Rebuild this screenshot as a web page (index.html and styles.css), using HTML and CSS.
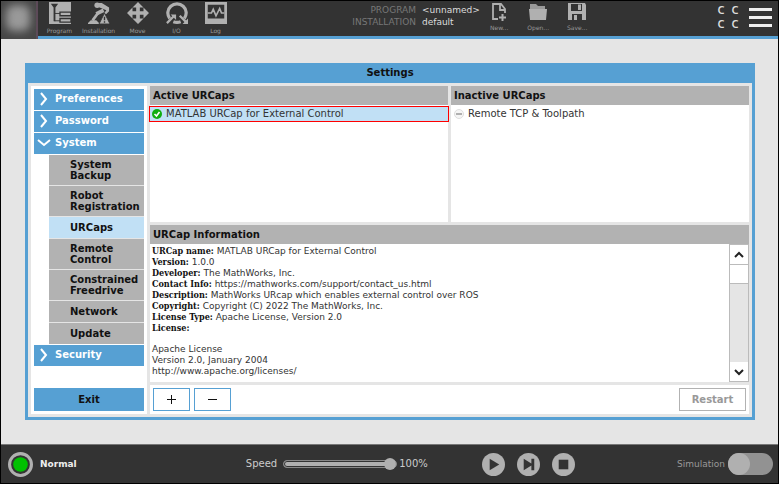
FILE: index.html
```
<!DOCTYPE html>
<html lang="en">
<head>
    <meta charset="UTF-8">
    <title>Settings</title>
    <link rel="stylesheet" href="styles.css">
</head>
<body>
<header class="topbar">
    <div class="start">
        <div class="logo"><div class="logo-pic"></div></div>
        <nav class="nav">
            <button class="tab">
                <svg viewBox="0 0 24 24"><path fill="#b0b0b0" d="M0 0h24v24H0z"/><path fill="#333" d="M2 2h8L7 6v15H5V6z"/><path d="M6 12.500h6M6 20.500h6" stroke="#333"/><path d="M12 11h12v4H12zM12 18h12v4H12z" fill="#b0b0b0" stroke="#333" stroke-width="1.500"/></svg>
                <span>Program</span>
            </button>
            <button class="tab">
                <svg viewBox="0 0 24 24"><path d="M0 24v-1l3-3h6l3 3v1z" fill="#b0b0b0"/><path d="M5 20l6-8" fill="none" stroke="#b0b0b0" stroke-width="3"/><path d="M9 13l8-4" stroke="#b0b0b0" stroke-width="4"/><path d="M10 1h5l8 5v4l-3 3h-3l3-4-10-4z" fill="#b0b0b0"/><circle cx="10" cy="3.500" r="3" fill="#b0b0b0"/><path d="M18 12l6 12H12z" fill="#b0b0b0" stroke="#333"/><path d="M18 16v4M18 21v1.500" stroke="#333" stroke-width="1.500"/></svg>
                <span>Installation</span>
            </button>
            <button class="tab">
                <svg viewBox="0 0 24 24"><path fill="#b0b0b0" d="M12 0l6 6h-4v4h4V6l6 6-6 6v-4h-4v4h4l-6 6-6-6h4v-4H6v4l-6-6 6-6v4h4V6H6z"/></svg>
                <span>Move</span>
            </button>
            <button class="tab">
                <svg viewBox="0 0 24 24"><path d="M4 18A10 10 0 1 1 20 18M8 21.500q4 1.500 8 0" fill="none" stroke="#b0b0b0" stroke-width="3.500"/><path d="M1 23l8-8M15 15l7 7" stroke="#b0b0b0" stroke-width="2.500"/><path d="M5 13.500h6v6zM24 18v6h-6z" fill="#b0b0b0"/></svg>
                <span>I/O</span>
            </button>
            <button class="tab">
                <svg viewBox="0 0 24 24"><path fill="#b0b0b0" d="M0 0h24v24H0z"/><path fill="#333" d="M3 3h18v15H3z"/><path d="M3 12h4l2-4 3 7 4-8 2 5h3" fill="none" stroke="#b0b0b0" stroke-width="1.800"/></svg>
                <span>Log</span>
            </button>
        </nav>
    </div>
    <div class="middle">
        <dl class="info">
            <dt>PROGRAM</dt><dd>&lt;unnamed&gt;</dd>
            <dt>INSTALLATION</dt><dd>default</dd>
        </dl>
        <div class="files">
            <button class="file">
                <svg viewBox="0 0 18 18"><path d="M15 10V6l-4-5H3v15h5M10 1v6h5" fill="none" stroke="#b0b0b0" stroke-width="1.800"/><path d="M12.500 11v7M9 14.500h7" stroke="#b0b0b0" stroke-width="2"/></svg>
                <span>New...</span>
            </button>
            <button class="file">
                <svg viewBox="0 0 18 18"><path d="M1 6V1h6l2 2h7v3z" fill="#999"/><path d="M0 6h18l-1 11H1z" fill="#b0b0b0"/></svg>
                <span>Open...</span>
            </button>
            <button class="file">
                <svg viewBox="0 0 18 18"><path d="M0 0h17l1 2v15H0z" fill="#b0b0b0"/><path d="M3 1h11v7H3zM4 11h10v6H4z" fill="#333"/><path d="M10 1.500h3V7h-3zM6 12h3v5H6z" fill="#b0b0b0"/></svg>
                <span>Save...</span>
            </button>
        </div>
    </div>
    <div class="end">
        <div class="code"><span>C</span><span>C</span><span>C</span><span>C</span></div>
        <button class="burger" aria-label="Menu"><i></i><i></i><i></i></button>
    </div>
</header>

<main class="main">
    <section class="dialog">
        <h1 class="title">Settings</h1>
        <div class="content">
            <aside class="side">
                <button class="group"><svg viewBox="0 0 14 14"><path d="M4 1l5 6-5 6"/></svg>Preferences</button>
                <button class="group"><svg viewBox="0 0 14 14"><path d="M4 1l5 6-5 6"/></svg>Password</button>
                <button class="group"><svg viewBox="0 0 14 14"><path d="M1 4l6 5 6-5"/></svg>System</button>
                <div class="subs">
                    <button class="sub">System<br>Backup</button>
                    <button class="sub">Robot<br>Registration</button>
                    <button class="sub active">URCaps</button>
                    <button class="sub">Remote<br>Control</button>
                    <button class="sub">Constrained<br>Freedrive</button>
                    <button class="sub">Network</button>
                    <button class="sub">Update</button>
                </div>
                <button class="group"><svg viewBox="0 0 14 14"><path d="M4 1l5 6-5 6"/></svg>Security</button>
                <button class="exit">Exit</button>
            </aside>
            <div class="panels">
                <div class="lists">
                    <div class="panel">
                        <h2 class="head">Active URCaps</h2>
                        <ul class="list">
                            <li class="item selected"><svg viewBox="0 0 10 10"><circle cx="5" cy="5" r="5" fill="#0fae0f"/><path d="M2.500 5l2 2 3-4" fill="none" stroke="#fff" stroke-width="1.600"/></svg>MATLAB URCap for External Control</li>
                        </ul>
                    </div>
                    <div class="panel">
                        <h2 class="head">Inactive URCaps</h2>
                        <ul class="list">
                            <li class="item"><svg viewBox="0 0 10 10"><circle cx="5" cy="5" r="4.500" fill="#f5f5f5" stroke="#ddd"/><path d="M2 5h6" stroke="#999" stroke-width="1.500"/></svg>Remote TCP &amp; Toolpath</li>
                        </ul>
                    </div>
                </div>
                <div class="panel details">
                    <h2 class="head">URCap Information</h2>
                    <div class="scroll">
                        <div class="text">
                            <p><b>URCap name:</b> MATLAB URCap for External Control</p>
                            <p><b>Version:</b> 1.0.0</p>
                            <p><b>Developer:</b> The MathWorks, Inc.</p>
                            <p><b>Contact Info:</b> https://mathworks.com/support/contact_us.html</p>
                            <p><b>Description:</b> MathWorks URcap which enables external control over ROS</p>
                            <p><b>Copyright:</b> Copyright (C) 2022 The MathWorks, Inc.</p>
                            <p><b>License Type:</b> Apache License, Version 2.0</p>
                            <p><b>License:</b></p>
                            <p class="license">Apache License<br>Version 2.0, January 2004<br>http://www.apache.org/licenses/</p>
                        </div>
                        <div class="bar">
                            <button class="arrow" aria-label="Scroll up"><svg viewBox="0 0 10 10"><path d="M1 7l4-4 4 4"/></svg></button>
                            <div class="thumb"></div>
                            <button class="arrow down" aria-label="Scroll down"><svg viewBox="0 0 10 10"><path d="M1 3l4 4 4-4"/></svg></button>
                        </div>
                    </div>
                </div>
                <div class="tools">
                    <button class="tool" aria-label="Add"><svg viewBox="0 0 9 9"><path d="M4.500 0v9M0 4.500h9"/></svg></button>
                    <button class="tool" aria-label="Remove"><svg viewBox="0 0 9 9"><path d="M0 4.500h9"/></svg></button>
                    <button class="restart" disabled>Restart</button>
                </div>
            </div>
        </div>
    </section>
</main>

<footer class="footer">
    <div class="status">
        <svg viewBox="0 0 24 24"><circle cx="12" cy="12" r="10.500" fill="#333" stroke="#b0b0b0" stroke-width="3"/><circle cx="12" cy="12" r="7" fill="#00c000"/></svg>
        <span>Normal</span>
    </div>
    <div class="controls">
        <label for="speed">Speed</label>
        <input class="speed" id="speed" type="range" min="0" max="100" value="100">
        <output for="speed">100%</output>
        <div class="play">
            <button aria-label="Play"><svg viewBox="0 0 24 24"><circle cx="12" cy="12" r="12"/><path d="M8 6l10 6-10 6z"/></svg></button>
            <button aria-label="Step"><svg viewBox="0 0 24 24"><circle cx="12" cy="12" r="12"/><path d="M7 6l8 5V6h3v12h-3v-5l-8 5z"/></svg></button>
            <button aria-label="Stop"><svg viewBox="0 0 24 24"><circle cx="12" cy="12" r="12"/><path d="M7 7h10v10H7z"/></svg></button>
        </div>
    </div>
    <div class="sim">
        <label for="sim">Simulation</label>
        <input class="switch" id="sim" type="checkbox">
    </div>
</footer>
</body>
</html>
```
FILE: styles.css
```
*{
    box-sizing: border-box;
    margin: 0;
    padding: 0;
}
body{
    display: flex;
    flex-direction: column;
    min-height: 100vh;
    border: 1px solid #000;
    background: #e5e5e5;
    color: #333;
    font: 10px/12px "DejaVu Sans", sans-serif;
}
button{
    border: 0;
    background: none;
    color: inherit;
    font: inherit;
}
svg{
    display: block;
}

/* top bar */
.topbar{
    display: flex;
    justify-content: space-between;
    height: 38px;
    border-bottom: 3px solid #56a0d3;
    background: #333;
    color: #ddd;
}
.start, .middle, .end, .nav, .files{
    display: flex;
}
.logo{
    width: 37px;
    height: 38px;
    overflow: hidden;
    background: #474747;
    border-right: 2px solid #5c4a58;
}
.logo-pic{
    width: 24px;
    height: 26px;
    margin: 4px 5px;
    border-radius: 8px;
    background: #999;
    filter: blur(4px);
}
.nav{
    margin-left: 2px;
}
.tab, .file{
    display: flex;
    flex-direction: column;
    align-items: center;
    width: 39px;
    color: #999;
    font-size: 6px;
    line-height: 10px;
}
.tab{
    padding-top: 1px;
}
.tab svg{
    width: 24px;
    height: 24px;
    margin-bottom: 2px;
}
.file{
    padding-top: 2px;
}
.file svg{
    width: 18px;
    height: 18px;
    margin-bottom: 2px;
}
.info{
    display: grid;
    grid-template-columns: auto auto;
    align-content: start;
    column-gap: 6px;
    padding-top: 3px;
    font-size: 9px;
}
.info dt{
    color: #777;
    text-align: right;
}
.end{
    gap: 7px;
    padding-right: 6px;
}
.code{
    display: grid;
    grid-template-columns: 14px 14px;
    align-content: start;
    padding-top: 2px;
    font-family: "Noto Sans", sans-serif;
    font-size: 11px;
    font-weight: 600;
    line-height: 14px;
    text-align: center;
}
.burger{
    display: flex;
    flex-direction: column;
    gap: 5px;
    padding-top: 7px;
}
.burger i{
    width: 23px;
    height: 3px;
    background: #eee;
}

/* settings dialog */
.main{
    display: flex;
    flex: 1;
    padding: 24px 23px 24px 24px;
}
.dialog{
    display: flex;
    flex: 1;
    flex-direction: column;
    border: 3px solid #56a0d3;
    border-top: 0;
    background: #e5e5e5;
}
.title{
    background: #56a0d3;
    color: #111;
    font-size: 10px;
    font-weight: 600;
    line-height: 20px;
    text-align: center;
}
.content{
    display: flex;
    flex: 1;
    gap: 3px;
    padding: 3px;
}
.side{
    display: flex;
    flex-direction: column;
    gap: 1px;
    width: 116px;
    padding: 3px;
    background: #fff;
    font-weight: 600;
}
.group{
    display: flex;
    align-items: center;
    gap: 4px;
    height: 21px;
    padding: 0 0 1px 3px;
    background: #56a0d3;
    color: #fff;
}
.group svg{
    width: 14px;
    height: 14px;
    fill: none;
    stroke: #fff;
    stroke-width: 2;
}
.subs{
    display: flex;
    flex-direction: column;
    gap: 1px;
    margin-left: 15px;
    background: #e5e5e5;
}
.sub{
    min-height: 21px;
    padding: 4px 0 4px 21px;
    background: #b2b2b2;
    color: #111;
    line-height: 11px;
    text-align: left;
}
.sub.active{
    background: #c1e0f5;
}
.exit{
    height: 23px;
    margin-top: auto;
    background: #56a0d3;
    color: #111;
}
.panels{
    display: flex;
    flex: 1;
    flex-direction: column;
    gap: 3px;
}
.lists{
    display: flex;
    flex: 1;
    gap: 3px;
}
.panel{
    flex: 1;
    background: #fff;
}
.head{
    padding-left: 3px;
    background: #b2b2b2;
    color: #111;
    font-size: 10px;
    font-weight: 600;
    line-height: 19px;
}
.list{
    padding-top: 2px;
    list-style: none;
}
.item{
    display: flex;
    align-items: center;
    gap: 4px;
    height: 14px;
    padding: 0 0 1px 3px;
}
.item svg{
    width: 10px;
    height: 10px;
}
.item.selected{
    position: relative;
    padding-left: 2px;
    background: #c1e0f5;
    box-shadow: 0 0 0 1px #f00;
}
.details{
    flex: none;
}
.scroll{
    display: flex;
    min-height: 138px;
}
.text{
    flex: 1;
    padding: 2px;
    font-size: 9px;
    line-height: 11px;
}
.text b{
    color: #111;
    font-family: "DejaVu Serif Condensed", "DejaVu Serif", serif;
    line-height: 1;
}
.license{
    padding-top: 10px;
}
.bar{
    display: flex;
    flex-direction: column;
    width: 20px;
    border: 1px solid #bbb;
    background: #e5e5e5;
}
.arrow{
    display: flex;
    align-items: center;
    justify-content: center;
    height: 19px;
    background: #fff;
}
.arrow svg{
    width: 10px;
    height: 10px;
    fill: none;
    stroke: #222;
    stroke-width: 2;
}
.arrow.down{
    margin-top: auto;
}
.thumb{
    height: 20px;
    border-top: 1px solid #bbb;
    border-bottom: 1px solid #bbb;
    background: #fff;
}
.tools{
    display: flex;
    gap: 4px;
    padding: 3px;
    background: #fff;
}
.tool{
    display: flex;
    align-items: center;
    justify-content: center;
    width: 37px;
    height: 23px;
    border: 1px solid #56a0d3;
}
.tool svg{
    width: 9px;
    height: 9px;
    stroke: #111;
}
.restart{
    width: 67px;
    margin-left: auto;
    border: 1px solid #b2b2b2;
    color: #999;
    font-weight: 600;
}

/* bottom bar */
.footer{
    display: grid;
    grid-template-columns: 6fr auto 5fr;
    align-items: center;
    height: 39px;
    padding: 0 5px 0 7px;
    border-top: 1px solid #777;
    background: #333;
    color: #ccc;
}
.status{
    display: flex;
    align-items: center;
    gap: 7px;
    color: #eee;
    font-size: 9px;
    font-weight: 600;
}
.status svg{
    width: 25px;
    height: 25px;
}
.controls, .play, .sim{
    display: flex;
    align-items: center;
}
.speed{
    width: 114px;
    height: 12px;
    margin: 0 2px 0 6px;
    appearance: none;
    background: none;
}
.speed::-webkit-slider-runnable-track{
    height: 8px;
    border: 1px solid #888;
    border-radius: 4px;
    background: #b0b0b0;
    box-shadow: inset 0 0 0 1px #333;
}
.speed::-webkit-slider-thumb{
    width: 12px;
    height: 12px;
    margin-top: -3px;
    appearance: none;
    border-radius: 50%;
    background: #b0b0b0;
}
.play{
    gap: 12px;
    margin-left: 54px;
}
.play svg{
    width: 23px;
    height: 23px;
}
.play circle{
    fill: #b0b0b0;
}
.play path{
    fill: #333;
}
.sim{
    justify-content: flex-end;
    gap: 3px;
    color: #999;
    font-size: 9px;
}
.switch{
    width: 45px;
    height: 22px;
    appearance: none;
    border-radius: 11px;
    background: #929292;
}
.switch::before{
    content: "";
    display: block;
    width: 22px;
    height: 22px;
    border-radius: 50%;
    background: #b0b0b0;
}
```
